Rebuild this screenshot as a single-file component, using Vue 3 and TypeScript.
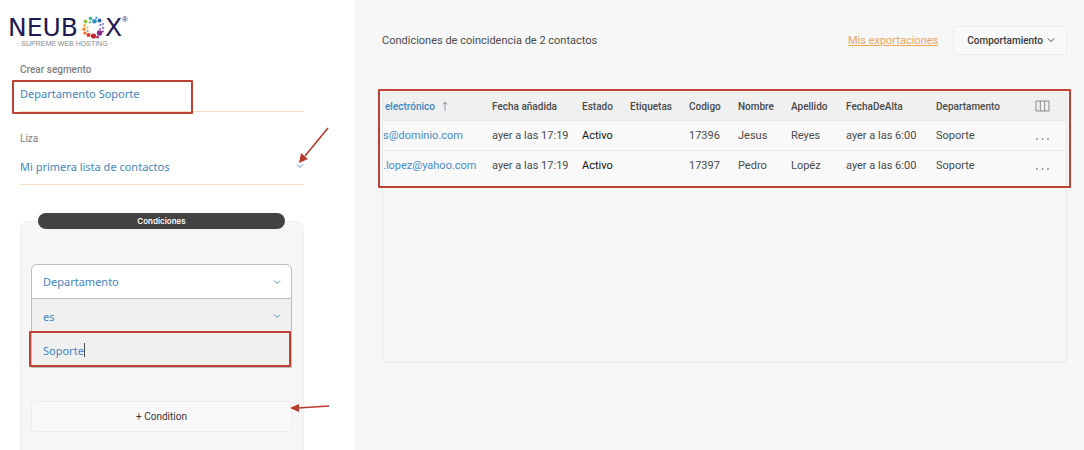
<script setup lang="ts">
import { ref } from 'vue'

interface Contact {
  email: string
  added: string
  status: string
  tags: string
  code: string
  name: string
  surname: string
  joined: string
  department: string
}

interface Dot {
  x: number
  y: number
  r: number
  fill: string
}

const segment = ref('Departamento Soporte')
const list = ref('Mi primera lista de contactos')
const field = ref('Departamento')
const operator = ref('es')
const value = ref('Soporte')

const columns: string[] = [
  'Fecha añadida',
  'Estado',
  'Etiquetas',
  'Codigo',
  'Nombre',
  'Apellido',
  'FechaDeAlta',
  'Departamento',
]
const columnWidths: number[] = [99, 90, 48, 59, 49, 53, 55, 90, 92, 48]

const contacts: Contact[] = [
  {
    email: 's@dominio.com',
    added: 'ayer a las 17:19',
    status: 'Activo',
    tags: '',
    code: '17396',
    name: 'Jesus',
    surname: 'Reyes',
    joined: 'ayer a las 6:00',
    department: 'Soporte',
  },
  {
    email: '.lopez@yahoo.com',
    added: 'ayer a las 17:19',
    status: 'Activo',
    tags: '',
    code: '17397',
    name: 'Pedro',
    surname: 'Lopéz',
    joined: 'ayer a las 6:00',
    department: 'Soporte',
  },
]

const dots: Dot[] = [
  { x: 85.5, y: 21.5, r: 1.9, fill: '#8cc63f' },
  { x: 90.5, y: 18.5, r: 1.8, fill: '#3fae9c' },
  { x: 94.5, y: 21.2, r: 2.3, fill: '#2a8fd0' },
  { x: 96.5, y: 17.8, r: 1.2, fill: '#4aa8dc' },
  { x: 99.5, y: 20.5, r: 1.9, fill: '#2565ae' },
  { x: 90, y: 22.3, r: 1.2, fill: '#7cc576' },
  { x: 103, y: 24, r: 1.1, fill: '#8a7cc0' },
  { x: 100.5, y: 25, r: 1.1, fill: '#6a6ab8' },
  { x: 103, y: 28, r: 1.4, fill: '#a68cc8' },
  { x: 100, y: 29, r: 0.9, fill: '#8a5aa8' },
  { x: 99.5, y: 33, r: 2.7, fill: '#93278f' },
  { x: 102.7, y: 31.5, r: 1.1, fill: '#7a3a98' },
  { x: 93.5, y: 36, r: 2.6, fill: '#c1272d' },
  { x: 97.5, y: 37, r: 1.5, fill: '#b02a6a' },
  { x: 88.5, y: 35, r: 2.1, fill: '#d9412c' },
  { x: 85, y: 33, r: 1.6, fill: '#ee6b2d' },
  { x: 84, y: 29.3, r: 1.8, fill: '#f28c28' },
  { x: 84.5, y: 25.5, r: 1.4, fill: '#f5b335' },
  { x: 87.5, y: 27.5, r: 0.9, fill: '#f5a623' },
  { x: 87.7, y: 31, r: 0.9, fill: '#f07a28' },
]
</script>

<template>
  <div class="app">
    <aside class="sidebar">
      <svg class="logo" viewBox="0 0 130 50" role="img" aria-label="Neubox Supreme Web Hosting">
        <text class="logo-name" x="8" y="36">NEUB</text>
        <circle v-for="(d, i) in dots" :key="i" :cx="d.x" :cy="d.y" :r="d.r" :fill="d.fill" />
        <text class="logo-name" x="105" y="36">X</text>
        <text class="logo-mark" x="122" y="22">®</text>
        <text class="logo-tag" x="17" y="46">· SUPREME WEB HOSTING ·</text>
      </svg>

      <div class="field">
        <label class="label strong" for="segment">Crear segmento</label>
        <div class="control segment">
          <input id="segment" v-model="segment" type="text" />
          <span class="frame frame-segment"></span>
        </div>
      </div>

      <div class="field field-list">
        <label class="label" for="list">Liza</label>
        <div class="control list">
          <select id="list" v-model="list">
            <option>Mi primera lista de contactos</option>
          </select>
          <svg class="chevron" viewBox="0 0 8 6"><path d="M1 1.5 4 4.5 7 1.5" /></svg>
          <svg class="arrow arrow-list" viewBox="0 0 34 40">
            <path class="shaft" d="M31 3 8 31" />
            <path class="head" d="M2 38 4 28 11 34Z" />
          </svg>
        </div>
      </div>

      <section class="conditions">
        <h2>Condiciones</h2>
        <div class="rule">
          <div class="row row-first">
            <select v-model="field" aria-label="Campo">
              <option>Departamento</option>
            </select>
            <svg class="chevron" viewBox="0 0 8 6"><path d="M1 1.5 4 4.5 7 1.5" /></svg>
          </div>
          <div class="row">
            <select v-model="operator" aria-label="Operador">
              <option>es</option>
            </select>
            <svg class="chevron" viewBox="0 0 8 6"><path d="M1 1.5 4 4.5 7 1.5" /></svg>
          </div>
          <div class="row row-value">
            <input v-model="value" class="value" type="text" aria-label="Valor" />
            <span class="caret"></span>
            <span class="frame frame-value"></span>
          </div>
        </div>
        <div class="add">
          <button type="button">+ Condition</button>
          <svg class="arrow arrow-add" viewBox="0 0 42 10">
            <path class="shaft" d="M40 3 9 5" />
            <path class="head" d="M1 5 10 1 10 9Z" />
          </svg>
        </div>
      </section>
    </aside>

    <main class="content">
      <header class="toolbar">
        <p>Condiciones de coincidencia de 2 contactos</p>
        <a href="#">Mis exportaciones</a>
        <button type="button">
          Comportamiento
          <svg viewBox="0 0 8 6"><path d="M1 1.5 4 4.5 7 1.5" /></svg>
        </button>
      </header>

      <div class="panel">
        <table>
          <colgroup>
            <col v-for="(w, i) in columnWidths" :key="i" :style="{ width: w + 'px' }" />
          </colgroup>
          <thead>
            <tr>
              <th class="sorted">
                electrónico
                <svg viewBox="0 0 6 10"><path d="M3 9.5V1M.8 3.4 3 1 5.2 3.4" /></svg>
              </th>
              <th v-for="c in columns" :key="c">{{ c }}</th>
              <th class="tools">
                <button type="button" aria-label="Columnas">
                  <svg viewBox="0 0 15 12">
                    <path d="M1 1h13v10H1zM5.3 1v10M9.7 1v10" />
                  </svg>
                </button>
              </th>
            </tr>
          </thead>
          <tbody>
            <tr v-for="c in contacts" :key="c.code">
              <td class="email"><a href="#">{{ c.email }}</a></td>
              <td>{{ c.added }}</td>
              <td class="status">{{ c.status }}</td>
              <td>{{ c.tags }}</td>
              <td>{{ c.code }}</td>
              <td>{{ c.name }}</td>
              <td>{{ c.surname }}</td>
              <td>{{ c.joined }}</td>
              <td>{{ c.department }}</td>
              <td class="tools">
                <button type="button" aria-label="Acciones">
                  <svg class="more" viewBox="0 0 15 4">
                    <circle cx="2" cy="2" r="0.9" />
                    <circle cx="7.5" cy="2" r="0.9" />
                    <circle cx="13" cy="2" r="0.9" />
                  </svg>
                </button>
              </td>
            </tr>
          </tbody>
        </table>
        <span class="frame frame-table"></span>
      </div>
    </main>
  </div>
</template>

<style>
body {
  margin: 0;
  background: #f7f7f7;
}
</style>

<style scoped>
.app {
  display: flex;
  height: 100vh;
  overflow: hidden;
  font-family: 'Noto Sans', sans-serif;
  font-size: 11px;
  color: #4a4a4a;
  background: #f7f7f7;
}

.app * {
  box-sizing: border-box;
}

input,
select,
button {
  margin: 0;
  padding: 0;
  border: 0;
  outline: 0;
  border-radius: 0;
  background: none;
  font: inherit;
  color: inherit;
  appearance: none;
}

.sidebar {
  flex: 0 0 354px;
  padding: 0 50px 0 20px;
  background: #fff;
}

.logo {
  display: block;
  width: 130px;
  height: 50px;
  margin-left: -20px;
}

.logo-name {
  font-family: 'DejaVu Sans', sans-serif;
  font-size: 25px;
  fill: #1f1a52;
}

.logo-mark {
  font-family: 'Liberation Sans', sans-serif;
  font-size: 8px;
  fill: #1f1a52;
}

.logo-tag {
  font-family: 'Liberation Sans', sans-serif;
  font-size: 7px;
  fill: #8a8a8a;
}

.field {
  margin-top: 12px;
}

.field-list {
  margin-top: 19px;
}

.label {
  display: block;
  font-family: Roboto, sans-serif;
  font-size: 10px;
  line-height: 16px;
  color: #808080;
}

.strong {
  font-weight: 500;
}

.control {
  position: relative;
  display: flex;
  align-items: center;
  border-bottom: 1px solid #f3dcc4;
  color: #3f86c0;
}

.control input,
.control select {
  width: 100%;
  height: 20px;
}

.segment {
  padding: 5px 0 8px;
}

.list {
  padding: 9px 0 8px;
}

.chevron {
  position: absolute;
  right: 0;
  width: 8px;
  height: 6px;
  fill: none;
  stroke: #4f93b8;
}

.frame {
  position: absolute;
  border: 2px solid #bf4133;
  border-radius: 1px;
  pointer-events: none;
}

.frame-segment {
  top: 2px;
  bottom: -3px;
  left: -8px;
  width: 181px;
}

.arrow {
  position: absolute;
  overflow: visible;
}

.shaft {
  fill: none;
  stroke: #b83a2c;
  stroke-width: 1.6;
}

.head {
  fill: #b83a2c;
}

.arrow-list {
  right: -27px;
  bottom: 19px;
  width: 34px;
  height: 40px;
}

.conditions {
  height: 300px;
  margin-top: 36px;
  padding: 0 11px 0 10px;
  border: 1px solid #efefef;
  border-radius: 8px;
  background: #f6f6f6;
}

.conditions h2 {
  margin: -9px 7px 35px;
  border-radius: 8px;
  background: #424242;
  font-family: Inter, sans-serif;
  font-size: 8px;
  font-weight: 600;
  line-height: 16px;
  text-align: center;
  color: #fff;
}

.rule {
  border: 1px solid #bdbdbd;
  border-radius: 6px 6px 0 0;
  background: #f0f0f0;
  color: #3f86c0;
}

.row {
  position: relative;
  display: flex;
  align-items: center;
  height: 34px;
  padding: 0 11px;
}

.row-first {
  border-bottom: 1px solid #bdbdbd;
  border-radius: 6px 6px 0 0;
  background: #fff;
}

.row select {
  width: 100%;
}

.row .chevron {
  right: 10px;
}

.value {
  field-sizing: content;
}

.caret {
  width: 1px;
  height: 14px;
  background: #4a4a4a;
}

.frame-value {
  inset: -2px 0 0 -3px;
}

.add {
  position: relative;
  margin-top: 33px;
}

.add button {
  width: 100%;
  height: 31px;
  border: 1px solid #ececec;
  border-radius: 5px;
  background: #f9f9f9;
  font-family: Roboto, sans-serif;
  font-size: 10px;
  color: #333;
}

.arrow-add {
  top: 2px;
  right: -39px;
  width: 42px;
  height: 10px;
}

.content {
  flex: 1;
  min-width: 0;
  padding: 25px 17px 0 28px;
  font-family: Roboto, sans-serif;
}

.toolbar {
  display: flex;
  align-items: center;
  height: 30px;
}

.toolbar p {
  flex: 1;
  margin: 0;
}

.toolbar a {
  margin-right: 15px;
  color: #eba55f;
}

.toolbar button {
  display: flex;
  align-items: center;
  gap: 4px;
  height: 29px;
  padding: 0 11px 0 13px;
  border: 1px solid #ededed;
  border-radius: 4px;
  background: #f9f9f9;
  font-size: 10px;
  font-weight: 500;
  color: #3a3a3a;
}

.toolbar svg {
  width: 8px;
  height: 6px;
  fill: none;
  stroke: #444;
}

.panel {
  position: relative;
  height: 271px;
  margin-top: 37px;
  border: 1px solid #e9e9e9;
  border-radius: 4px;
}

table {
  width: 100%;
  border-collapse: collapse;
  table-layout: fixed;
}

th,
td {
  padding: 0 0 0 10px;
  overflow: hidden;
  text-align: left;
  white-space: nowrap;
}

thead {
  background: #f0f0f0;
}

tbody {
  background: #f9f9f9;
}

th {
  height: 27px;
  font-size: 10px;
  font-weight: 500;
}

td {
  height: 30px;
  border-top: 1px solid #e8e8e8;
}

.sorted {
  padding-left: 2px;
  color: #3f86c0;
}

.sorted svg {
  width: 6px;
  height: 10px;
  margin-left: 5px;
  vertical-align: -1px;
  fill: none;
  stroke: #8090a0;
}

.email {
  padding-left: 0;
}

.email a {
  color: #4a8ccc;
  text-decoration: none;
}

.status {
  color: #111;
}

.tools {
  padding: 0;
  text-align: center;
}

.tools button {
  display: inline-flex;
  vertical-align: middle;
}

.tools svg {
  width: 15px;
  height: 12px;
  fill: none;
  stroke: #8a8a8a;
}

.tools .more {
  height: 4px;
  margin-top: 6px;
  fill: #888;
  stroke: none;
}

.frame-table {
  top: -4px;
  right: -5px;
  left: -5px;
  height: 99px;
}
</style>
